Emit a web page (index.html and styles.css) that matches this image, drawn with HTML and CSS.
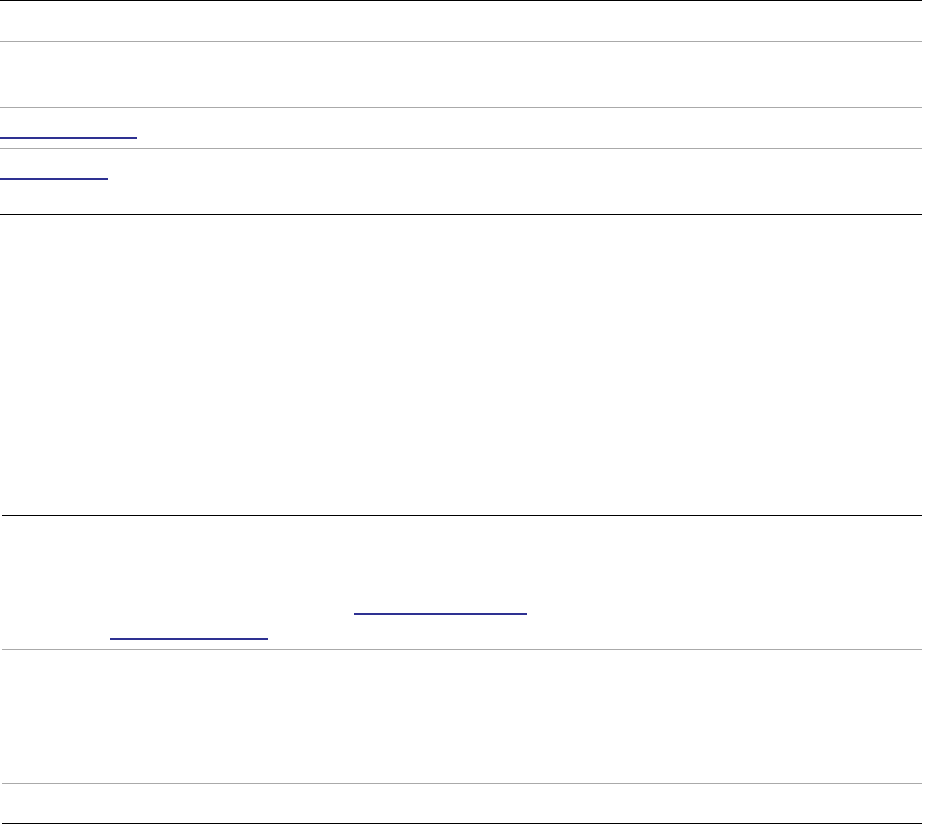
FILE: index.html
```html
<!DOCTYPE html>
<html lang="en">
<head>
<meta charset="utf-8">
<title>Page</title>
<link rel="stylesheet" href="styles.css">
</head>
<body>
  <div class="sheet top">
    <div class="row short"></div>
    <div class="row tall"></div>
    <div class="row short"><a class="link l1" href="#"></a></div>
    <div class="row tall last"><a class="link l2" href="#"></a></div>
  </div>
  <div class="gap"></div>
  <div class="sheet bottom">
    <div class="row big">
      <a class="link l3" href="#"></a>
      <a class="link l4" href="#"></a>
    </div>
    <div class="row big"></div>
    <div class="row foot last"></div>
  </div>
</body>
</html>
```

FILE: styles.css
```css
html, body {
  margin: 0;
  padding: 0;
  background: #ffffff;
  font-family: "Liberation Sans", Arial, sans-serif;
}

.sheet {
  border-top: 1px solid #000000;
}

.top {
  width: 922px;
}

.bottom {
  width: 920px;
  margin-left: 2px;
}

.row {
  box-sizing: border-box;
  border-bottom: 1px solid #aaaaaa;
  display: flex;
  flex-direction: column;
  align-items: flex-start;
}

.row.last {
  border-bottom-color: #000000;
}

.short {
  height: 41px;
  padding-top: 29px;
}

.tall {
  height: 66px;
  padding-top: 29px;
}

.big {
  height: 134px;
  padding-top: 97px;
}

.foot {
  height: 40px;
}

.gap {
  height: 300px;
}

.link {
  display: block;
  height: 0;
  border-bottom: 2px solid #2e3192;
}

.l1 { width: 137px; }
.l2 { width: 108px; }
.l3 { width: 173px; margin-left: 352px; }
.l4 { width: 158px; margin-left: 108px; margin-top: 23px; }
```
